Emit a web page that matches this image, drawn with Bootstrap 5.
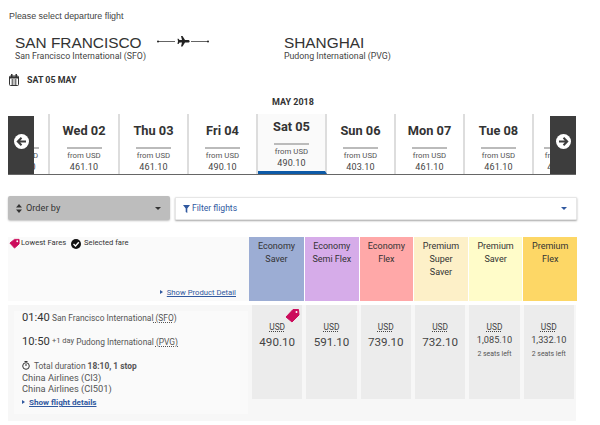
<!DOCTYPE html>
<html lang="en"><head><meta charset="utf-8"><title>Flights</title>
<link href="https://cdn.jsdelivr.net/npm/bootstrap@5.3.0/dist/css/bootstrap.min.css" rel="stylesheet">
<style>
html,body{height:425px;overflow:hidden;background:#fff}
body{font-family:Roboto,"Liberation Sans",sans-serif;color:#444;font-size:10px;line-height:1.2}
.pg{width:600px;height:425px;padding:11px 23px 0 8px}
.lead-txt{font-size:8.9px;line-height:11px;margin-left:1px;font-family:"Liberation Sans",sans-serif}
.route{margin:12px 0 0 7px;height:30px}
.city b{display:block;font-weight:400;font-size:15.4px;line-height:17px;color:#333;font-family:"Liberation Sans",sans-serif}
.city span{display:block;font-size:8.8px;line-height:10px}
.city.dest{margin-left:72px}
.flyline{width:55px;height:17px;margin:-1px 0 0 11px;flex:none}
.date-line{margin:9px 0 0 1px;height:14px;font-weight:700;font-size:8.9px;color:#333;gap:8px}
.month{text-align:center;font-weight:700;font-size:9px;line-height:10px;margin-top:10px;color:#333;padding-left:1px}
.strip{position:relative;height:61px;margin-top:7px;border-bottom:1px solid #666;overflow:hidden;width:568px}
.days{height:60px;margin-left:-13px}
.dayc{width:69px;flex:none;border-right:2px solid #ddd;text-align:center;padding-top:8px;height:60px;color:#444}
.dayc.wide{width:70px}
.dayc.stub{width:55px}
.dayc.last{border:0;width:55px}
.dayc h6{font-weight:700;font-size:12.8px;line-height:17px;margin:0 0 8px;color:#333;min-height:17px}
.dayc hr{width:35px;margin:0 auto 2px;border:0;border-top:2px solid #bbb;opacity:1}
.dayc small{display:block;font-size:7.8px;line-height:10px;color:#555}
.dayc p{font-size:9px;line-height:11px;margin:1px 0 0;letter-spacing:.1px}
.dayc.sel{background:#fafafa;border-bottom:3px solid #0d5aa7;padding-top:4px}
.navb{position:absolute;top:2px;bottom:0;width:26px;background:#3d3d3d;display:flex;align-items:center;justify-content:center;padding-bottom:8px}
.navb.l{left:0}.navb.r{right:0}
.filters{margin-top:21px;gap:5px}
.orderb{width:162px;height:24px;background:#bdbdbd;border-radius:2px;box-shadow:0 1px 2px rgba(0,0,0,.25);padding:0 9px 0 8px;font-size:9.2px;color:#333}
.filterb{flex:1;height:23px;margin-top:1px;background:#fff;border:1px solid #e6e6e6;box-shadow:0 1px 2px rgba(0,0,0,.35);padding:0 9px 0 7px;font-size:8.6px;color:#30589f;border-radius:1px}
.caret-d{width:0;height:0;border-left:3px solid transparent;border-right:3px solid transparent;border-top:3px solid currentColor}
.headrow{margin-top:17px;height:64px;width:569px}
.legend{width:241px;background:#fafafa;position:relative;padding:1px 0 0 1px;font-size:7.6px;color:#333}
.prod{position:absolute;right:13px;bottom:4px;font-size:7.7px;color:#30589f;text-decoration:underline}
.prod i,.sfl i{display:inline-block;width:0;height:0;border-left:3px solid #30589f;border-top:2.5px solid transparent;border-bottom:2.5px solid transparent;margin-right:4px;vertical-align:1px}
.fare{flex:1;text-align:center;font-size:9px;line-height:13px;padding-top:3px;color:#333;border-left:1px solid #fff}
.f1{background:#9cadd4;border:0;flex:none;width:55px}.f2{background:#d6ace9}.f3{background:#ffa8a8}.f4{background:#fdf0c8}.f5{background:#fffcc9}.f6{background:#fdd766}
.farerow{margin-top:4px;height:116px;width:568px;background:#f7f7f7}
.info{width:234px;margin:6px 0 7px 6px;background:#fafafa;padding:0 0 0 8px;font-size:8.4px;color:#555;flex:none}
.tm{font-size:11.2px;color:#333}
.ln1{height:22px;line-height:14px}
.ln1 + .ln2{margin-top:0}
.ln2{height:26.5px;line-height:17px}
.ln2 sup{font-size:7.5px;top:-.3em}
.iata{text-decoration:underline dotted}
.ln3{font-size:8.4px;line-height:12px}
.ln4{line-height:11.7px;font-size:9.3px}
.sfl{color:#30589f;font-weight:700;font-size:8.1px;text-decoration:underline;line-height:13px;margin-top:1px}
.prices{flex:1;gap:4px;padding-left:4px;padding-right:2px}
.pc{flex:1;background:#ececec;height:94px;text-align:center;padding-top:17px;position:relative;color:#444}
.pc u{display:block;font-size:8.4px;line-height:11px;text-decoration:underline dotted}
.pc strong{display:block;font-weight:400;font-size:11.6px;line-height:16px;margin-top:1px}
.pc strong.sm{font-size:9.2px;line-height:13px;margin-top:0}
.pc em{display:block;font-style:normal;font-size:6.9px;line-height:9px;margin-top:4px;color:#555}
.ptag{position:absolute;right:2px;top:3px}
</style></head><body>
<div class="pg">
<div class="lead-txt">Please select departure flight</div>
<div class="route d-flex">
 <div class="city"><b>SAN FRANCISCO</b><span>San Francisco International (SFO)</span></div>
 <div class="flyline"><svg width="55" height="17" viewBox="0 0 55 17"><g fill="#222"><rect x="1" y="8" width="17" height=".7"/><rect x="34" y="8" width="17" height=".7"/><circle cx="1" cy="8.400" r="1"/><circle cx="51" cy="8.400" r="1"/><path d="M24 3h1.500l2.500 4h3c1 0 1.700.6 1.700 1.300s-.7 1.300-1.700 1.300h-3l-2.500 4H24l1-4h-2.500l-1 1.300h-1l.5-2.600-.5-2.600h1l1 1.300H25z"/></g></svg></div>
 <div class="city dest"><b>SHANGHAI</b><span>Pudong International (PVG)</span></div>
</div>
<div class="date-line d-flex align-items-center"><svg width="10" height="12" viewBox="0 0 10 12" fill="none"><rect x=".5" y="2" width="9" height="9.500" rx="1" stroke="#333"/><rect x="2" y="0" width="1.500" height="3" fill="#333"/><rect x="6.500" y="0" width="1.500" height="3" fill="#333"/><rect x="1" y="2.500" width="8" height="2" fill="#333"/><path d="M2 6h6M2 8h6M2 10h6M3.500 5v6M6.500 5v6" stroke="#555" stroke-width=".7"/></svg><span>SAT 05 MAY</span></div>
<div class="month">MAY 2018</div>
<div class="strip">
 <div class="days d-flex">
  <div class="dayc stub"><h6></h6><hr><small>from USD</small><p>461.10</p></div>
  <div class="dayc wide"><h6>Wed 02</h6><hr><small>from USD</small><p>461.10</p></div>
  <div class="dayc"><h6>Thu 03</h6><hr><small>from USD</small><p>461.10</p></div>
  <div class="dayc"><h6>Fri 04</h6><hr><small>from USD</small><p>490.10</p></div>
  <div class="dayc sel"><h6>Sat 05</h6><hr><small>from USD</small><p>490.10</p></div>
  <div class="dayc"><h6>Sun 06</h6><hr><small>from USD</small><p>403.10</p></div>
  <div class="dayc"><h6>Mon 07</h6><hr><small>from USD</small><p>461.10</p></div>
  <div class="dayc"><h6>Tue 08</h6><hr><small>from USD</small><p>461.10</p></div>
  <div class="dayc last"><h6></h6><hr><small>from USD</small><p>461.10</p></div>
 </div>
 <div class="navb l"><svg width="15" height="15" viewBox="0 0 15 15"><circle cx="7.500" cy="7.500" r="7.500" fill="#fff"/><path d="M12 7.500H4M7.500 3.800 3.800 7.500l3.700 3.700" stroke="#3d3d3d" stroke-width="2" fill="none"/></svg></div>
 <div class="navb r"><svg width="15" height="15" viewBox="0 0 15 15"><circle cx="7.500" cy="7.500" r="7.500" fill="#fff"/><path d="M3 7.500h8M7.500 3.800l3.700 3.700-3.700 3.700" stroke="#3d3d3d" stroke-width="2" fill="none"/></svg></div>
</div>
<div class="filters d-flex">
 <div class="orderb d-flex align-items-center"><svg width="6" height="9" viewBox="0 0 6 9" style="margin-right:4px"><path d="M3 0l3 3.500H0zM3 9 0 5.500h6z" fill="#333"/></svg><span class="flex-grow-1">Order by</span><i class="caret-d"></i></div>
 <div class="filterb d-flex align-items-center"><svg width="7" height="8" viewBox="0 0 7 8" style="margin-right:2px"><path d="M0 0h7L4.300 3.500V8L2.700 7V3.500z" fill="#30589f"/></svg><span class="flex-grow-1">Filter flights</span><i class="caret-d"></i></div>
</div>
<div class="headrow d-flex">
 <div class="legend d-flex align-items-start">
  <svg width="11" height="11" viewBox="0 0 12 11"><path d="M1 5 6 1h5v5l-5 4.500z" fill="#cc0c5c" stroke="#cc0c5c" stroke-linejoin="round"/><circle cx="9" cy="3" r="1" fill="#fff"/></svg>
  <span style="margin-left:1px">Lowest Fares</span>
  <svg width="10" height="10" viewBox="0 0 10 10" style="margin:1px 3px 0 5px"><circle cx="5" cy="5" r="5" fill="#111"/><path d="M2.500 5 4.500 7 7.800 3.300" stroke="#fff" stroke-width="1.400" fill="none"/></svg>
  <span>Selected fare</span>
  <div class="prod"><i></i>Show Product Detail</div>
 </div>
 <div class="fare f1">Economy<br>Saver</div>
 <div class="fare f2">Economy<br>Semi Flex</div>
 <div class="fare f3">Economy<br>Flex</div>
 <div class="fare f4">Premium<br>Super<br>Saver</div>
 <div class="fare f5">Premium<br>Saver</div>
 <div class="fare f6">Premium<br>Flex</div>
</div>
<div class="farerow d-flex">
 <div class="info">
  <div class="ln1"><span class="tm">01:40</span> San Francisco International<span class="iata"> (SFO)</span></div>
  <div class="ln2"><span class="tm">10:50</span> <sup>+1 day</sup> Pudong International <span class="iata">(PVG)</span></div>
  <div class="ln3 d-flex align-items-center"><svg width="8" height="9" viewBox="0 0 8 9" fill="none" class="me-1"><circle cx="4" cy="5" r="3.300" stroke="#333"/><path d="M2.500.5h3M4 3v2" stroke="#333"/></svg><span>Total duration <b>18:10, 1 stop</b></span></div>
  <div class="ln4">China Airlines (CI3)</div>
  <div class="ln4">China Airlines (CI501)</div>
  <div class="sfl"><i></i>Show flight details</div>
 </div>
 <div class="prices d-flex">
  <div class="pc"><svg class="ptag" width="15" height="15" viewBox="0 0 15 15"><path d="M1 9 8 1.500h5.500l.5 5.500-7 7z" fill="#cc0c5c" stroke="#cc0c5c" stroke-linejoin="round"/><circle cx="11.500" cy="4" r="1" fill="#fff"/></svg><u>USD</u><strong>490.10</strong></div>
  <div class="pc"><u>USD</u><strong>591.10</strong></div>
  <div class="pc"><u>USD</u><strong>739.10</strong></div>
  <div class="pc"><u>USD</u><strong>732.10</strong></div>
  <div class="pc"><u>USD</u><strong class="sm">1,085.10</strong><em>2 seats left</em></div>
  <div class="pc"><u>USD</u><strong class="sm">1,332.10</strong><em>2 seats left</em></div>
 </div>
</div>
</div>
<script src="https://cdn.jsdelivr.net/npm/bootstrap@5.3.0/dist/js/bootstrap.bundle.min.js"></script>
</body></html>
